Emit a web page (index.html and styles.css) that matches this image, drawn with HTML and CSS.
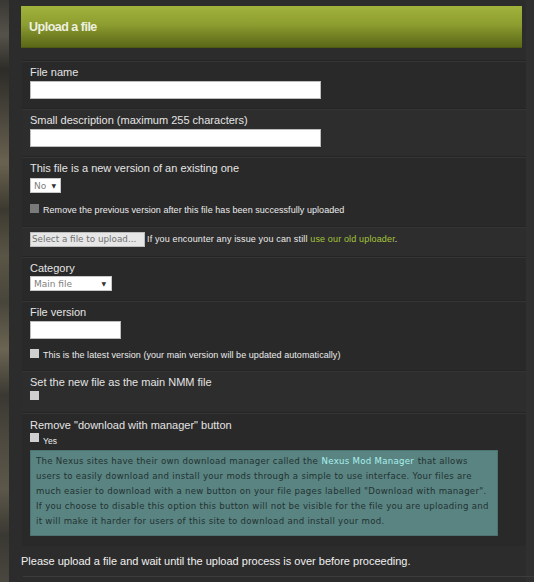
FILE: index.html
```html
<!DOCTYPE html>
<html>
<head>
<meta charset="utf-8">
<link rel="stylesheet" href="styles.css">
</head>
<body>
<div class="strip"></div>
<div class="main">
  <div class="header">Upload a file</div>
  <div class="row dark r1">
    <div class="label">File name</div>
    <div class="input wide"></div>
  </div>
  <div class="row light r2">
    <div class="label">Small description (maximum 255 characters)</div>
    <div class="input wide"></div>
  </div>
  <div class="row dark r3">
    <div class="label">This file is a new version of an existing one</div>
    <div class="select sel-no"><span class="val">No</span><span class="arrow">&#9660;</span></div>
    <div class="check-line cl3"><span class="cb cb-dis"></span><span class="small">Remove the previous version after this file has been successfully uploaded</span></div>
  </div>
  <div class="row light r4">
    <span class="button">Select a file to upload...</span><span class="small tip">If you encounter any issue you can still <span class="link">use our old uploader</span>.</span>
  </div>
  <div class="row dark r5">
    <div class="label">Category</div>
    <div class="select sel-cat"><span class="val">Main file</span><span class="arrow">&#9660;</span></div>
  </div>
  <div class="row dark r6">
    <div class="label">File version</div>
    <div class="input short"></div>
    <div class="check-line cl6"><span class="cb"></span><span class="small">This is the latest version (your main version will be updated automatically)</span></div>
  </div>
  <div class="row light r7">
    <div class="label">Set the new file as the main NMM file</div>
    <div class="check-line cl7"><span class="cb"></span></div>
  </div>
  <div class="row dark r8">
    <div class="label">Remove "download with manager" button</div>
    <div class="check-line cl8"><span class="cb"></span><span class="small">Yes</span></div>
    <div class="info">The Nexus sites have their own download manager called the <span class="nmm">Nexus Mod Manager</span> that allows users to easily download and install your mods through a simple to use interface. Your files are much easier to download with a new button on your file pages labelled "Download with manager". If you choose to disable this option this button will not be visible for the file you are uploading and it will make it harder for users of this site to download and install your mod.</div>
  </div>
  <div class="note">Please upload a file and wait until the upload process is over before proceeding.</div>
  <div class="rule"></div>
</div>
</body>
</html>
```

FILE: styles.css
```css
html, body {
  margin: 0;
  padding: 0;
}
body {
  background: #2c2c2c;
  display: flex;
  min-height: 582px;
  font-family: "Liberation Sans", Arial, sans-serif;
  color: #e2e2e2;
  overflow: hidden;
}
.strip {
  width: 9px;
  flex: none;
  background: linear-gradient(180deg, #3a3834 0%, #55524a 6%, #2e2c28 12%, #4a463c 20%, #6a6250 28%, #3c3930 36%, #5a5545 44%, #48453b 52%, #6a6452 60%, #3a3832 68%, #4e4a40 76%, #5c574a 84%, #3a3832 92%, #4a4740 100%);
}
.main {
  flex: 1;
  padding: 6px 8px 0 12px;
  background: #2c2c2c;
  box-shadow: inset -8px 0 0 #303030;
}
.header {
  height: 42px;
  margin-right: 4px;
  background: linear-gradient(180deg, #a1b23c 0%, #8d9e30 45%, #6c7a20 80%, #5b6818 100%);
  border-bottom: 1px solid #4e5914;
  box-sizing: border-box;
  display: flex;
  align-items: center;
  padding-left: 8px;
  padding-top: 1px;
  font-weight: bold;
  font-size: 12.5px;
  letter-spacing: -0.5px;
  color: #eef0e0;
  margin-bottom: 12px;
}
.row {
  margin-left: 1px;
  border-top: 1px solid #242424;
  box-shadow: inset 0 1px 0 #353535;
  padding: 4px 8px 9px 8px;
}
.row.dark { background: #292929; }
.row.light { background: #2d2d2d; }
.label {
  font-size: 11px;
  line-height: 14px;
  color: #e4e4e4;
}
.input {
  margin-top: 2px;
  height: 18px;
  box-sizing: border-box;
  background: #ffffff;
  border: 1px solid #bdbdbd;
}
.input.wide { width: 291px; }
.input.short { width: 91px; }
.select {
  box-sizing: border-box;
  height: 15px;
  background: #ffffff;
  border: 1px solid #c8c8c8;
  display: flex;
  align-items: center;
  justify-content: space-between;
  padding: 0 4px 0 3px;
  font-family: "DejaVu Sans", Verdana, sans-serif;
  font-size: 9px;
  color: #808080;
}
.select .arrow {
  font-size: 6px;
  color: #333;
}
.sel-no { width: 31px; margin-top: 3px; }
.sel-cat { width: 82px; margin-top: 1px; padding-right: 5px; }
.check-line {
  display: flex;
  align-items: flex-start;
  gap: 4px;
}
.cb {
  width: 9px;
  height: 9px;
  background: #cfcfcf;
  flex: none;
}
.cb.cb-dis { background: #7a7a7a; }
.small {
  font-size: 9px;
  line-height: 11px;
  letter-spacing: 0.05px;
  color: #ececec;
}
.cl3 { margin-top: 11px; }
.cl3 .small, .cl6 .small { margin-top: 1px; }
.r3 { padding-bottom: 10px; }
.r4 {
  padding-top: 5px;
  padding-bottom: 9px;
  display: flex;
  align-items: center;
}
.button {
  box-sizing: border-box;
  height: 15px;
  width: 115px;
  background: #e6e6e6;
  border: 1px solid #bdbdbd;
  font-family: "DejaVu Sans", Verdana, sans-serif;
  font-size: 8.8px;
  line-height: 13px;
  color: #707070;
  padding-left: 1px;
  white-space: nowrap;
  overflow: hidden;
}
.tip { margin-left: 2px; letter-spacing: 0.15px; }
.link { color: #a4c33c; }
.cl6 { margin-top: 10px; }
.r6 { padding-bottom: 9px; }
.cl7 { margin-top: 2px; }
.r7 { padding-bottom: 12px; }
.r8 { padding-top: 5px; padding-bottom: 10px; }
.cl8 { margin-top: 1px; }
.cl8 .small { margin-top: 3px; font-size: 8.5px; }
.info {
  margin-top: 3px;
  width: 468px;
  box-sizing: border-box;
  background: #5a8481;
  border: 1px solid #4d7370;
  padding: 3px 4px 6px 5px;
  font-family: "DejaVu Sans", Verdana, sans-serif;
  font-size: 8.6px;
  line-height: 15px;
  letter-spacing: 0.28px;
  color: #223232;
}
.nmm { color: #a8f0ee; margin: 0 0.5px; }
.note {
  margin-top: 7px;
  font-size: 11px;
  line-height: 16px;
  color: #f0f0f0;
}
.rule {
  margin-top: 7px;
  margin-left: 2px;
  margin-right: -8px;
  height: 1px;
  background: #3c3c3c;
}
```
